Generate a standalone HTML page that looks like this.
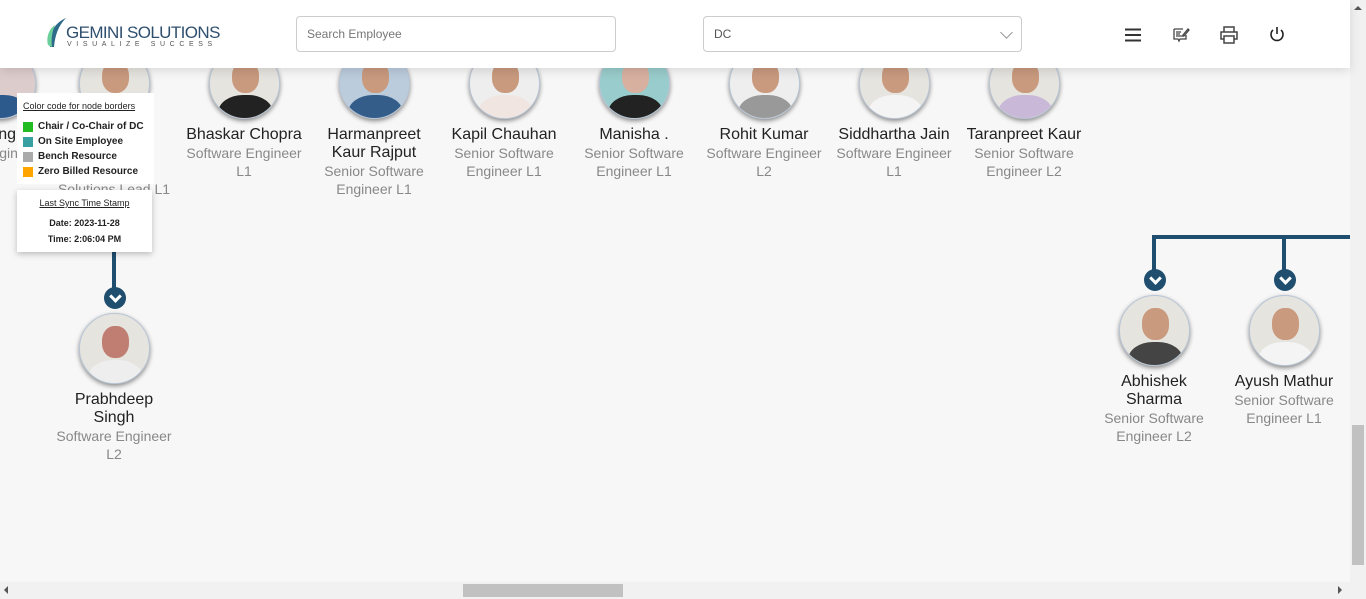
<!DOCTYPE html>
<html><head><meta charset="utf-8"><style>
*{margin:0;padding:0;box-sizing:border-box}
body{width:1366px;height:599px;overflow:hidden;background:#f7f7f7;font-family:"Liberation Sans",Arial,sans-serif;position:relative}
.hdr{position:absolute;left:0;top:0;width:1350px;height:68px;background:#fff;box-shadow:0 3px 10px rgba(0,0,0,.12);z-index:5}
.node{position:absolute;width:130px;text-align:center}
.av{width:71px;height:71px;border-radius:50%;margin:0 auto;box-shadow:0 2px 5px rgba(0,0,0,.45);border:1px solid #b9c6d6;overflow:hidden;position:relative;background:#e6e4df}
.av .h{position:absolute;left:22px;top:12px;width:27px;height:32px;border-radius:45%;background:#c99a7e}
.av .b{position:absolute;left:8px;top:46px;width:55px;height:40px;border-radius:45% 45% 0 0;background:#3a3a3a}
.nm{font-size:16px;color:#222;line-height:18px;margin-top:7px}
.tt{font-size:14px;color:#888;line-height:18px}
.ln{position:absolute;background:#1f4e6e}
.chev{position:absolute;width:22px;height:22px;border-radius:50%;background:#1f4e6e}
.chev:after{content:"";position:absolute;left:7px;top:5px;width:6px;height:6px;border-right:3px solid #fff;border-bottom:3px solid #fff;transform:rotate(45deg)}
.box{position:absolute;background:#fff;box-shadow:0 2px 6px rgba(0,0,0,.25);z-index:3}
.lg{font-size:10px;font-weight:bold;color:#222;line-height:15px;display:flex;align-items:center}
.lg i{display:inline-block;width:10px;height:10px;margin-right:5px}
</style></head><body>
<div class="hdr">
 <svg style="position:absolute;left:46px;top:17px" width="22" height="32" viewBox="0 0 22 32"><path d="M4 30 C2 18 8 6 20 1 C12 9 9 19 8 30Z" fill="#2e6a8a"/><path d="M2 28 C0 20 3 12 9 8 C6 15 5 22 6 30Z" fill="#6ccf9a"/></svg>
 <div style="position:absolute;left:66px;top:23px;font-size:17px;color:#2f4f6f;letter-spacing:-0.6px;white-space:nowrap">GEMINI SOLUTIONS</div>
 <div style="position:absolute;left:67px;top:41px;font-size:7px;color:#555;letter-spacing:4.6px;white-space:nowrap">VISUALIZE SUCCESS</div>
 <div style="position:absolute;left:296px;top:16px;width:320px;height:36px;border:1px solid #ccc;border-radius:4px;font-size:12px;color:#777;padding:10px 10px">Search Employee</div>
 <div style="position:absolute;left:703px;top:16px;width:319px;height:36px;border:1px solid #ccc;border-radius:4px;font-size:12px;color:#555;padding:10px 10px">DC<span style="position:absolute;right:10px;top:11px;width:9px;height:9px;border-right:1px solid #999;border-bottom:1px solid #999;transform:rotate(45deg)"></span></div>
 <svg style="position:absolute;left:1124px;top:28px" width="18" height="14"><path d="M1 1.5h16M1 7h16M1 12.5h16" stroke="#333" stroke-width="2"/></svg>
 <svg style="position:absolute;left:1172px;top:26px" width="18" height="18" viewBox="0 0 18 18" fill="none" stroke="#444" stroke-width="1.3"><path d="M2 3h9M2 3v10h4l1 2 1-2h6V9"/><path d="M4 6h5M4 8h4M4 10h8"/><path d="M11 9l5-6 1 1-5 6h-1z"/></svg>
 <svg style="position:absolute;left:1220px;top:26px" width="18" height="18" viewBox="0 0 18 18" fill="none" stroke="#444" stroke-width="1.5"><path d="M4 6V1h10v5M4 13H1V6h16v7h-3M4 10h10v7H4z"/></svg>
 <svg style="position:absolute;left:1268px;top:26px" width="18" height="18" viewBox="0 0 18 18" fill="none" stroke="#222" stroke-width="1.6"><path d="M9 1v7M5 4a6 6 0 1 0 8 0"/></svg>
</div>

<div class="node" style="left:-65px;top:48px"><div class="av" style="background:#dcc"><div class="b" style="background:#2d5a8c"></div></div><div class="nm">Sing</div><div class="tt">Engin</div></div>
<div class="node" style="left:49px;top:48px"><div class="av"><div class="h"></div><div class="b" style="background:#ddd"></div></div><div class="nm">Mr</div><div class="tt">Senior<br>Technical<br>Solutions Lead L1</div></div>
<div class="node" style="left:179px;top:48px"><div class="av"><div class="h"></div><div class="b" style="background:#222"></div></div><div class="nm">Bhaskar Chopra</div><div class="tt">Software Engineer<br>L1</div></div>
<div class="node" style="left:309px;top:48px"><div class="av" style="background:#bcd"><div class="h"></div><div class="b" style="background:#345d8a"></div></div><div class="nm">Harmanpreet<br>Kaur Rajput</div><div class="tt">Senior Software<br>Engineer L1</div></div>
<div class="node" style="left:439px;top:48px"><div class="av" style="background:#eee"><div class="h"></div><div class="b" style="background:#f0e5e0"></div></div><div class="nm">Kapil Chauhan</div><div class="tt">Senior Software<br>Engineer L1</div></div>
<div class="node" style="left:569px;top:48px"><div class="av" style="background:#9cc"><div class="h" style="background:#d8b0a0"></div><div class="b" style="background:#222"></div></div><div class="nm">Manisha .</div><div class="tt">Senior Software<br>Engineer L1</div></div>
<div class="node" style="left:699px;top:48px"><div class="av" style="background:#eee"><div class="h"></div><div class="b" style="background:#999"></div></div><div class="nm">Rohit Kumar</div><div class="tt">Software Engineer<br>L2</div></div>
<div class="node" style="left:829px;top:48px"><div class="av"><div class="h"></div><div class="b" style="background:#f4f4f4"></div></div><div class="nm">Siddhartha Jain</div><div class="tt">Software Engineer<br>L1</div></div>
<div class="node" style="left:959px;top:48px"><div class="av"><div class="h"></div><div class="b" style="background:#c9b8d8"></div></div><div class="nm">Taranpreet Kaur</div><div class="tt">Senior Software<br>Engineer L2</div></div>

<div class="ln" style="left:112px;top:250px;width:4px;height:40px"></div>
<div class="chev" style="left:104px;top:287px"></div>
<div class="node" style="left:49px;top:313px"><div class="av"><div class="h" style="background:#c07e73"></div><div class="b" style="background:#eee"></div></div><div class="nm">Prabhdeep<br>Singh</div><div class="tt">Software Engineer<br>L2</div></div>

<div class="ln" style="left:1152px;top:235px;width:198px;height:4px"></div>
<div class="ln" style="left:1152px;top:235px;width:4px;height:38px"></div>
<div class="ln" style="left:1282px;top:235px;width:4px;height:38px"></div>
<div class="chev" style="left:1144px;top:269px"></div>
<div class="chev" style="left:1274px;top:269px"></div>
<div class="node" style="left:1089px;top:295px"><div class="av"><div class="h"></div><div class="b" style="background:#444"></div></div><div class="nm">Abhishek<br>Sharma</div><div class="tt">Senior Software<br>Engineer L2</div></div>
<div class="node" style="left:1219px;top:295px"><div class="av"><div class="h"></div><div class="b" style="background:#f4f4f4"></div></div><div class="nm">Ayush Mathur</div><div class="tt">Senior Software<br>Engineer L1</div></div>

<div class="box" style="left:17px;top:93px;width:137px;height:91px;box-shadow:none;padding:8px 0 0 6px">
 <div style="font-size:9px;color:#222;text-decoration:underline;margin-bottom:8px">Color code for node borders</div>
 <div class="lg"><i style="background:#22bb22"></i>Chair / Co-Chair of DC</div>
 <div class="lg"><i style="background:#38a0a0"></i>On Site Employee</div>
 <div class="lg"><i style="background:#aaa"></i>Bench Resource</div>
 <div class="lg"><i style="background:#ffa500"></i>Zero Billed Resource</div>
</div>
<div class="box" style="left:17px;top:190px;width:135px;height:62px;text-align:center;padding-top:8px">
 <div style="font-size:9px;color:#222;text-decoration:underline;margin-bottom:7px">Last Sync Time Stamp</div>
 <div style="font-size:9px;font-weight:bold;color:#222;line-height:16px">Date: 2023-11-28<br>Time: 2:06:04 PM</div>
</div>

<div style="position:absolute;left:1350px;top:0;width:16px;height:582px;background:#f1f1f1"><div style="position:absolute;left:2px;top:425px;width:12px;height:140px;background:#c1c1c1"></div><div style="position:absolute;left:4px;top:6px;border:4px solid transparent;border-bottom-color:#555;border-top:none"></div></div>
<div style="position:absolute;left:0;top:582px;width:1366px;height:17px;background:#f1f1f1"><div style="position:absolute;left:463px;top:2px;width:160px;height:13px;background:#c1c1c1"></div><div style="position:absolute;left:4px;top:4px;border:4px solid transparent;border-right-color:#555;border-left:none"></div><div style="position:absolute;left:1338px;top:4px;border:4px solid transparent;border-left-color:#555;border-right:none"></div></div>
</body></html>
